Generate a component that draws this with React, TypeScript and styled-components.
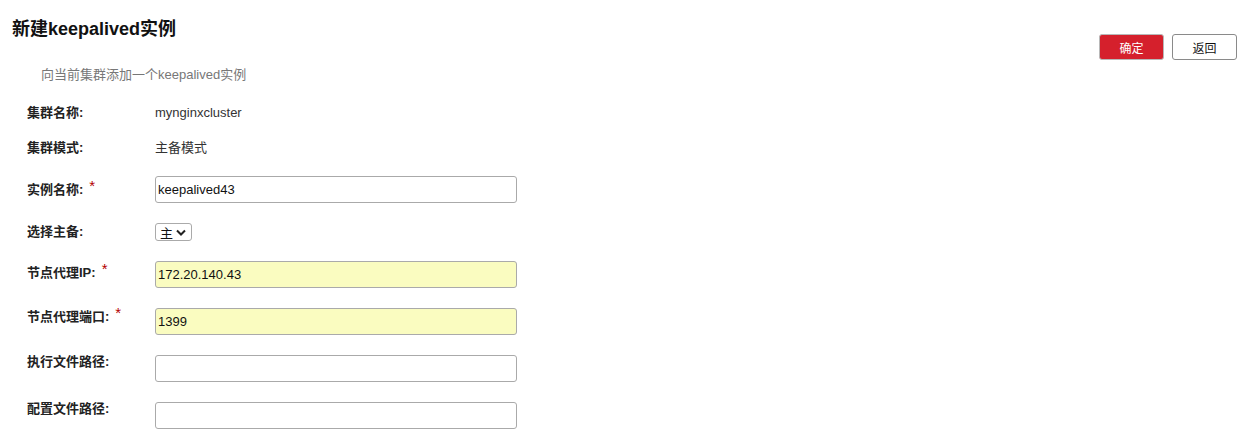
import * as React from 'react'
import styled, { createGlobalStyle } from 'styled-components'

const GlobalStyle = createGlobalStyle`
  html, body {
    margin: 0;
    padding: 0;
    background: #fff;
  }
  body {
    font-family: 'Liberation Sans', Arial, 'Noto Sans CJK SC', sans-serif;
    color: #222;
  }
`

const Page = styled.div`
  width: 1242px;
  height: 441px;
  overflow: hidden;
  position: relative;
`

const Header = styled.div`
  display: flex;
  justify-content: space-between;
  align-items: flex-start;
  padding: 0 5px 0 12px;
`

const Title = styled.h1`
  margin: 18px 0 0;
  font-size: 18px;
  line-height: 22px;
  font-weight: bold;
  color: #111;
`

const Actions = styled.div`
  display: flex;
  gap: 8px;
  margin-top: 34px;
`

const Button = styled.button<{ $primary?: boolean }>`
  width: 65px;
  height: 26px;
  padding: 0;
  border-radius: 3px;
  font-family: inherit;
  font-size: 12px;
  cursor: pointer;
  border: 1px solid ${p => (p.$primary ? '#b8b8b8' : '#8a8a8a')};
  background: ${p => (p.$primary ? '#d5202c' : '#fff')};
  color: ${p => (p.$primary ? '#fff' : '#111')};
`

const Subtitle = styled.p`
  margin: 6px 0 0 41px;
  font-size: 13px;
  line-height: 18px;
  color: #777;
`

const Form = styled.div`
  display: flex;
  flex-direction: column;
  padding-left: 27px;
`

const Row = styled.div<{ $mt: number; $h: number }>`
  display: flex;
  align-items: flex-start;
  margin-top: ${p => p.$mt}px;
  height: ${p => p.$h}px;
`

const Label = styled.div<{ $offset?: number }>`
  width: 128px;
  flex: none;
  font-size: 13px;
  line-height: 20px;
  font-weight: bold;
  color: #222;
  margin-top: ${p => p.$offset ?? 0}px;
  white-space: nowrap;
`

const Required = styled.span`
  color: #b30000;
  font-weight: normal;
  font-size: 15px;
  position: relative;
  top: -3px;
  margin-left: 6px;
`

const Value = styled.div`
  font-size: 13px;
  line-height: 20px;
  color: #333;
`

const TextInput = styled.input<{ $filled?: boolean }>`
  box-sizing: border-box;
  width: 362px;
  height: 27px;
  padding: 0 2px;
  border: 1px solid #aaa;
  border-radius: 3px;
  font-family: inherit;
  font-size: 13px;
  color: #111;
  background: ${p => (p.$filled ? '#fafcc0' : '#fff')};
  outline: none;
`

const SelectBox = styled.div`
  box-sizing: border-box;
  width: 37px;
  height: 18px;
  border: 1px solid #aaa;
  border-radius: 3px;
  display: flex;
  align-items: center;
  padding-left: 4px;
  gap: 3px;
  font-size: 13px;
  color: #111;
  background: #fff;
`

function Chevron() {
  return (
    <svg width="10" height="7" viewBox="0 0 10 7">
      <path d="M1 1.5 L5 5.5 L9 1.5" fill="none" stroke="#222" strokeWidth="2" />
    </svg>
  )
}

export default function App() {
  const [name, setName] = React.useState('keepalived43')
  const [ip, setIp] = React.useState('172.20.140.43')
  const [port, setPort] = React.useState('1399')
  const [execPath, setExecPath] = React.useState('')
  const [confPath, setConfPath] = React.useState('')

  return (
    <Page>
      <GlobalStyle />
      <Header>
        <Title>新建keepalived实例</Title>
        <Actions>
          <Button $primary>确定</Button>
          <Button>返回</Button>
        </Actions>
      </Header>
      <Subtitle>向当前集群添加一个keepalived实例</Subtitle>
      <Form>
        <Row $mt={19} $h={20}>
          <Label>集群名称:</Label>
          <Value>mynginxcluster</Value>
        </Row>
        <Row $mt={15} $h={20}>
          <Label>集群模式:</Label>
          <Value>主备模式</Value>
        </Row>
        <Row $mt={18} $h={27}>
          <Label $offset={3}>
            实例名称:<Required>*</Required>
          </Label>
          <TextInput value={name} onChange={e => setName(e.target.value)} />
        </Row>
        <Row $mt={20} $h={18}>
          <Label $offset={-1}>选择主备:</Label>
          <SelectBox>
            主<Chevron />
          </SelectBox>
        </Row>
        <Row $mt={20} $h={27}>
          <Label $offset={1}>
            节点代理IP:<Required>*</Required>
          </Label>
          <TextInput $filled value={ip} onChange={e => setIp(e.target.value)} />
        </Row>
        <Row $mt={20} $h={27}>
          <Label $offset={-2}>
            节点代理端口:<Required>*</Required>
          </Label>
          <TextInput $filled value={port} onChange={e => setPort(e.target.value)} />
        </Row>
        <Row $mt={20} $h={27}>
          <Label $offset={-3}>执行文件路径:</Label>
          <TextInput value={execPath} onChange={e => setExecPath(e.target.value)} />
        </Row>
        <Row $mt={20} $h={27}>
          <Label $offset={-3}>配置文件路径:</Label>
          <TextInput value={confPath} onChange={e => setConfPath(e.target.value)} />
        </Row>
      </Form>
    </Page>
  )
}
